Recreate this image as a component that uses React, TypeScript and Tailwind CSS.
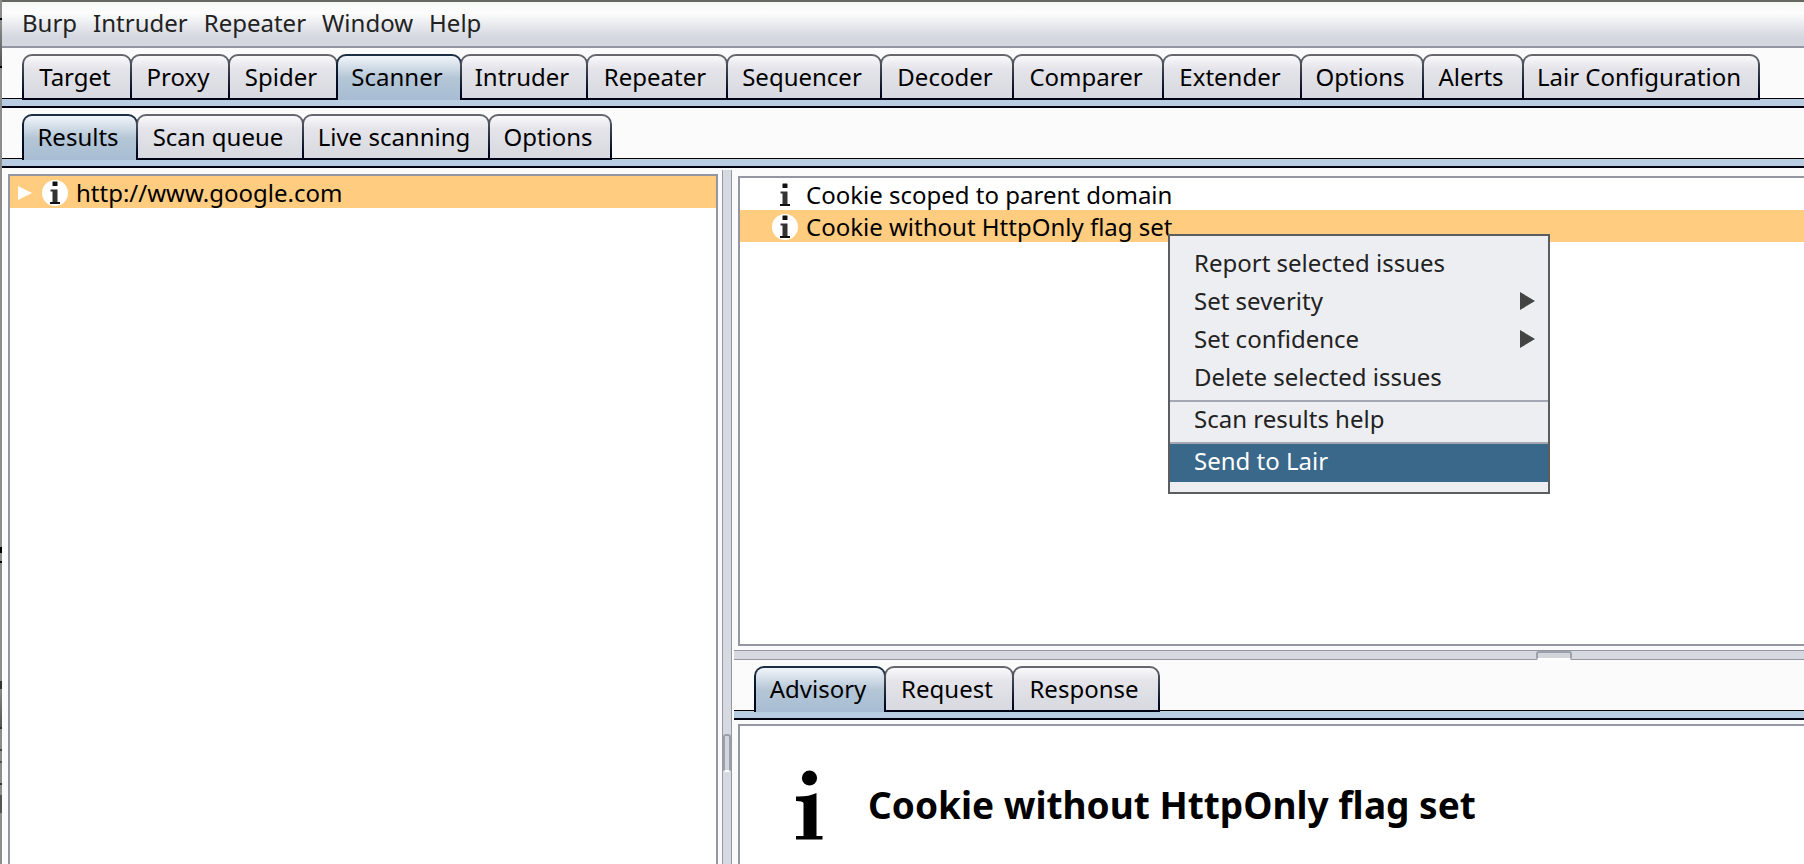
import React from "react";

type TabItem = { label: string; width: string };

const mainTabs: TabItem[] = [
  { label: "Target", width: "w-[110px]" },
  { label: "Proxy", width: "w-[100px]" },
  { label: "Spider", width: "w-[110px]" },
  { label: "Scanner", width: "w-[126px]" },
  { label: "Intruder", width: "w-[128px]" },
  { label: "Repeater", width: "w-[142px]" },
  { label: "Sequencer", width: "w-[156px]" },
  { label: "Decoder", width: "w-[134px]" },
  { label: "Comparer", width: "w-[152px]" },
  { label: "Extender", width: "w-[140px]" },
  { label: "Options", width: "w-[124px]" },
  { label: "Alerts", width: "w-[102px]" },
  { label: "Lair Configuration", width: "w-[238px]" },
];

const scannerTabs: TabItem[] = [
  { label: "Results", width: "w-[116px]" },
  { label: "Scan queue", width: "w-[168px]" },
  { label: "Live scanning", width: "w-[188px]" },
  { label: "Options", width: "w-[124px]" },
];

const detailTabs: TabItem[] = [
  { label: "Advisory", width: "w-[132px]" },
  { label: "Request", width: "w-[130px]" },
  { label: "Response", width: "w-[148px]" },
];

function Tabs({ items, active, label }: { items: TabItem[]; active: string; label: string }) {
  return (
    <div className="shrink-0 bg-[#fbfbfb]">
      <div role="tablist" aria-label={label} className="relative z-10 flex pt-1.5 pl-[22px]">
        {items.map((t) => {
          const on = t.label === active;
          return (
            <button
              key={t.label}
              type="button"
              role="tab"
              aria-selected={on}
              className={`${t.width} -ml-0.5 flex h-[46px] shrink-0 rounded-t-[10px] bg-linear-to-b px-0.5 pt-0.5 ${
                on ? "from-[#1c3046] to-[#000010] pb-0" : "from-[#6a6a70] to-[#000014] pb-0.5"
              }`}
            >
              <span
                className={`flex flex-1 items-center justify-center whitespace-nowrap rounded-t-[8px] bg-linear-to-b pr-1 ${
                  on
                    ? "from-[#f2f5fa] via-[#b4c6d6] via-50% to-[#a7bdd4] pb-0.5"
                    : "from-[#fafafc] via-[#e4e4ea] via-30% to-[#d8d9e0]"
                }`}
              >
                {t.label}
              </span>
            </button>
          );
        })}
      </div>
      <div className="-mt-0.5 h-2.5 border-t border-b-2 border-t-black border-b-[#000010] bg-[#b8cde2]" />
    </div>
  );
}

function InfoIcon({ className, round }: { className: string; round?: boolean }) {
  return (
    <svg viewBox="0 0 26 26" className={className} aria-hidden="true">
      {round && <circle cx="13" cy="13" r="13" fill="#fff" />}
      <rect x="10.500" y="1.500" width="5" height="4.500" rx="0.500" fill="#111" />
      <path d="M8.500 9.500H15.500V22H10.500V11.500H8.500Z" fill="#333" />
      <path d="M8 22H18V24H8Z" fill="#111" />
    </svg>
  );
}

function MenuItem({ label, sub, active }: { label: string; sub?: boolean; active?: boolean }) {
  return (
    <button
      type="button"
      role="menuitem"
      className={`flex h-[38px] w-full items-center justify-between pr-3 pb-1 pl-6 text-left ${
        active ? "bg-[#39688a] text-white" : "text-[#222]"
      }`}
    >
      {label}
      {sub && (
        <svg viewBox="0 0 16 18" className="h-[18px] w-4" aria-hidden="true">
          <path d="M0 0L15 9L0 18Z" fill="#444" />
        </svg>
      )}
    </button>
  );
}

export default function App() {
  return (
    <div className="flex h-screen overflow-hidden bg-[#fbfbfb] font-['Noto_Sans','Open_Sans',sans-serif] text-[24px] leading-8 text-black">
      <div className="flex w-0.5 shrink-0 flex-col bg-[#8c8c8c]">
        <div className="mt-[18px] h-0.5 bg-black" />
        <div className="mt-1.5 h-10 bg-linear-to-b from-[#888] to-[#555]" />
        <div className="h-0.5 bg-black" />
        <div className="mt-[479px] h-1.5 bg-black" />
        <div className="mt-2 h-0.5 bg-black" />
        <div className="mt-[118px] h-2 bg-[#333]" />
        <div className="h-[38px] bg-linear-to-b from-[#888] to-[#555]" />
        <div className="h-0.5 bg-[#333]" />
        <div className="mt-5 h-0.5 bg-[#444]" />
        <div className="mt-2.5 h-0.5 bg-[#555]" />
        <div className="mt-5 h-0.5 bg-[#333]" />
        <div className="mt-2.5 h-[18px] bg-[#555]" />
      </div>
      <div className="flex min-w-0 flex-1 flex-col">
        <nav
          aria-label="Menu bar"
          className="flex h-12 shrink-0 items-center gap-4 border-t-2 border-b-2 border-t-[#666763] border-b-[#9496a4] bg-linear-to-b from-[#f5f8f5] via-[#fdfdfd] via-25% to-[#d4d7df] to-80% pb-0.5 pl-5 text-[#222]"
        >
          {["Burp", "Intruder", "Repeater", "Window", "Help"].map((m) => (
            <button key={m} type="button">
              {m}
            </button>
          ))}
        </nav>
        <Tabs items={mainTabs} active="Scanner" label="Tools" />
        <Tabs items={scannerTabs} active="Results" label="Scanner" />

        <main className="flex min-h-0 flex-1">
          <section aria-label="Site tree" className="flex w-[720px] shrink-0 pt-1.5 pr-1 pl-1.5">
            <div className="flex-1 border-2 border-b-0 border-[#9496a4] bg-white">
              <button type="button" className="flex h-8 w-full items-center bg-[#ffcc80] pt-0.5 pl-2 text-left">
                <svg viewBox="0 0 14 14" className="mr-2.5 h-3.5 w-3.5" aria-hidden="true">
                  <path d="M0 0L14 7L0 14Z" fill="#fff" />
                </svg>
                <InfoIcon round className="mr-2 h-[26px] w-[26px]" />
                http://www.google.com
              </button>
            </div>
          </section>

          <div
            role="separator"
            aria-orientation="vertical"
            className="mt-0.5 flex w-2.5 shrink-0 items-end justify-center border-x border-[#9496a4] bg-[#d6d9e0] pb-[92px]"
          >
            <div className="h-[38px] w-2 shrink-0 rounded-[3px] border-2 border-[#9ba0aa] border-b-white bg-[#d2d5da]" />
          </div>

          <div className="ml-0.5 flex min-w-0 flex-1 flex-col">
            <section aria-label="Issues" className="flex h-[482px] shrink-0 pt-2 pb-1 pl-1">
              <div className="relative flex-1 border-2 border-r-0 border-[#9496a4] bg-white">
                <button type="button" className="flex h-8 w-full items-center pt-0.5 pl-8 text-left">
                  <InfoIcon className="mr-2 h-[26px] w-[26px]" />
                  Cookie scoped to parent domain
                </button>
                <button type="button" className="flex h-8 w-full items-center bg-[#ffcc80] pt-0.5 pl-8 text-left">
                  <InfoIcon round className="mr-2 h-[26px] w-[26px]" />
                  Cookie without HttpOnly flag set
                </button>
                <div
                  role="menu"
                  className="absolute top-14 left-[428px] w-[382px] border-2 border-[#5c5d60] bg-[#edeef2] pt-2.5 pb-2.5"
                >
                  <MenuItem label="Report selected issues" />
                  <MenuItem label="Set severity" sub />
                  <MenuItem label="Set confidence" sub />
                  <MenuItem label="Delete selected issues" />
                  <hr className="mt-0.5 border-t-2 border-[#a3a8b2]" />
                  <MenuItem label="Scan results help" />
                  <hr className="mt-0.5 border-t-2 border-[#a3a8b2]" />
                  <MenuItem label="Send to Lair" active />
                </div>
              </div>
            </section>

            <div
              role="separator"
              aria-orientation="horizontal"
              className="flex h-2.5 shrink-0 items-start justify-center border-y border-[#9496a4] bg-[#d6d9e0] pl-[570px]"
            >
              <div className="z-10 h-[9px] w-9 shrink-0 rounded-[3px] border-2 border-[#9ba0aa] border-b-white bg-[#d2d5da]" />
            </div>

            <Tabs items={detailTabs} active="Advisory" label="Issue detail" />

            <section aria-label="Advisory" className="flex min-h-0 flex-1 pt-1 pl-1">
              <div className="flex-1 border-t-2 border-l-2 border-[#9496a4] bg-white pt-11 pl-14">
                <div className="flex items-center">
                  <svg viewBox="0 0 28 70" className="mr-11 h-[70px] w-7" aria-hidden="true">
                    <circle cx="13.500" cy="8" r="7.600" fill="#000" />
                    <path d="M0 26.500Q12 27 20.500 23V66H26.500V69.500H0V66H7.500V33Q7 31 0 31Z" fill="#000" />
                  </svg>
                  <h1 className="text-[37px] leading-[48px] font-bold whitespace-nowrap">
                    Cookie without HttpOnly flag set
                  </h1>
                </div>
              </div>
            </section>
          </div>
        </main>
      </div>
    </div>
  );
}
